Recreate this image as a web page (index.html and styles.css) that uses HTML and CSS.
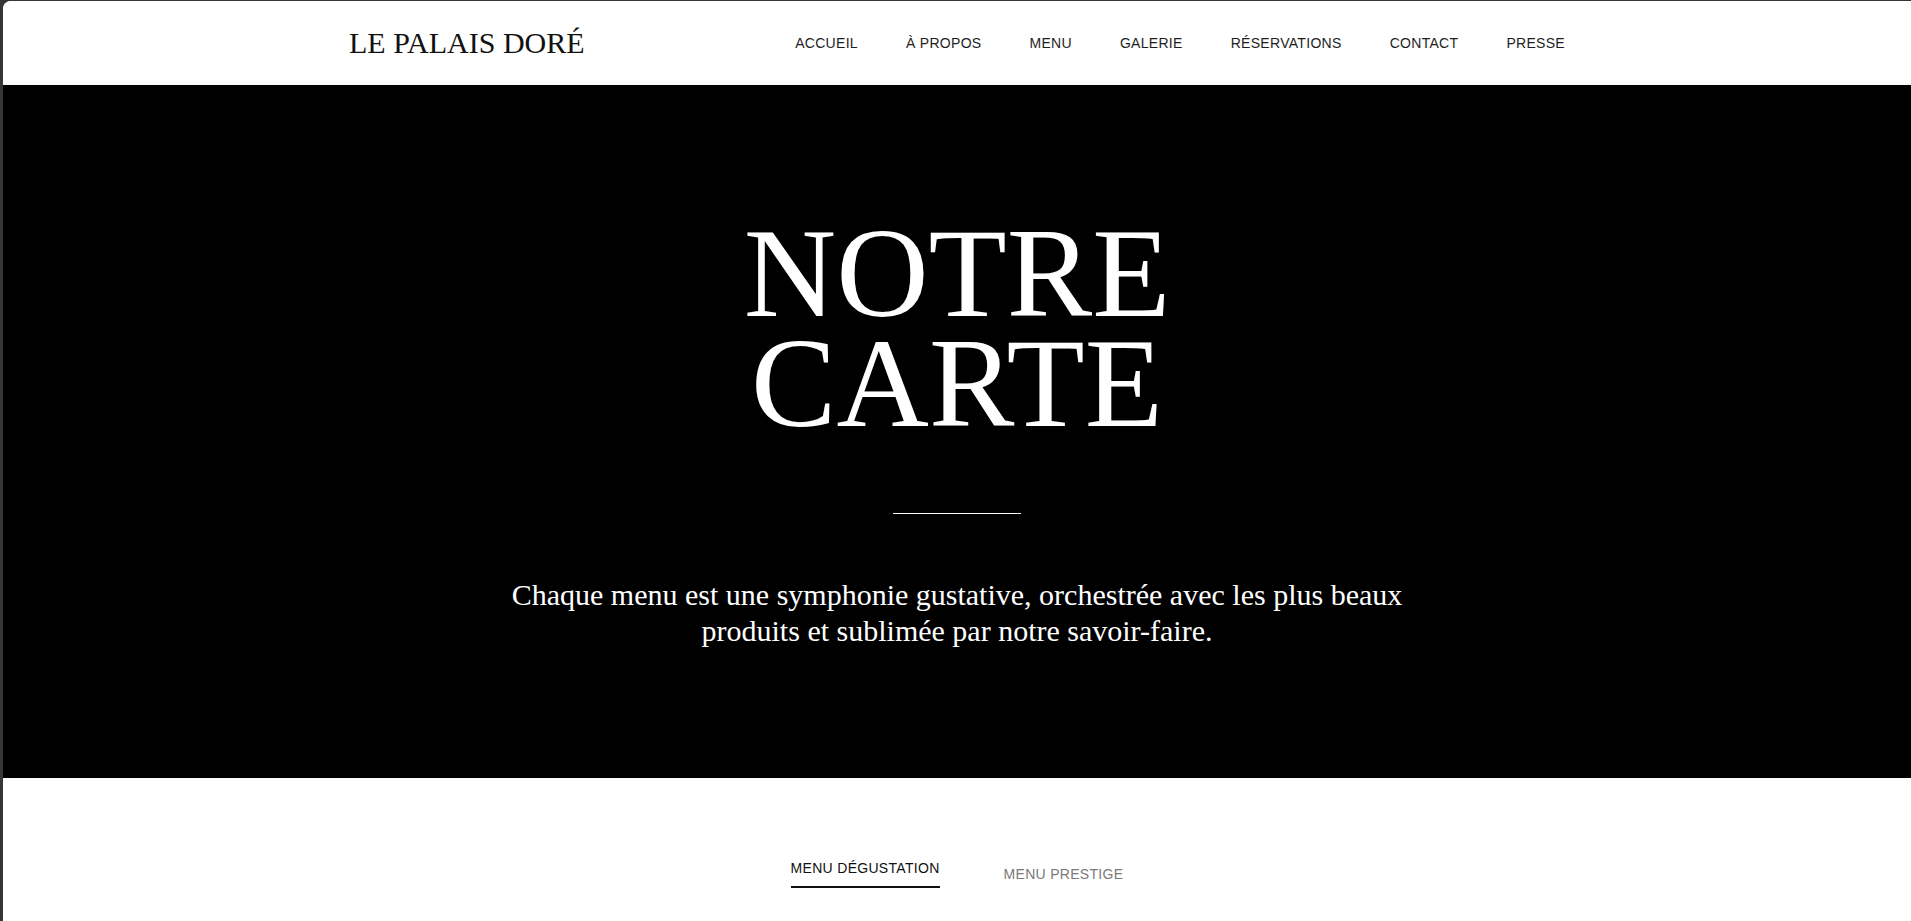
FILE: index.html
```html
<!DOCTYPE html>
<html lang="fr">
<head>
<meta charset="utf-8">
<title>Le Palais Doré — Notre Carte</title>
<link rel="stylesheet" href="styles.css">
</head>
<body>
<div class="window">
  <header class="site-header">
    <div class="header-inner">
      <a class="logo" href="#">LE PALAIS DORÉ</a>
      <nav class="main-nav">
        <a href="#">ACCUEIL</a>
        <a href="#">À PROPOS</a>
        <a href="#">MENU</a>
        <a href="#">GALERIE</a>
        <a href="#">RÉSERVATIONS</a>
        <a href="#">CONTACT</a>
        <a href="#">PRESSE</a>
      </nav>
    </div>
  </header>

  <section class="hero">
    <h1 class="hero-title">NOTRE<br>CARTE</h1>
    <div class="hero-divider"></div>
    <p class="hero-text">Chaque menu est une symphonie gustative, orchestrée avec les plus beaux produits et sublimée par notre savoir-faire.</p>
  </section>

  <section class="menus">
    <div class="tabs">
      <button class="tab active">MENU DÉGUSTATION</button>
      <button class="tab">MENU PRESTIGE</button>
    </div>
  </section>
</div>
</body>
</html>
```
FILE: styles.css
```css
html, body {
  margin: 0;
  padding: 0;
}

body {
  background: #363636;
  font-family: "Liberation Sans", Arial, sans-serif;
  overflow: hidden;
}

.window {
  margin: 1px 0 0 3px;
  background: #ffffff;
  border-top-left-radius: 8px;
  overflow: hidden;
  min-height: 920px;
}

.site-header {
  height: 84px;
  display: flex;
  background: #ffffff;
  box-shadow: inset 0 -6px 6px -6px rgba(0, 0, 0, 0.07);
}

.header-inner {
  width: 100%;
  max-width: 1280px;
  margin: 0 auto;
  padding: 0 32px;
  box-sizing: border-box;
  display: flex;
  align-items: center;
  justify-content: space-between;
}

.logo {
  font-family: "Liberation Serif", "Times New Roman", serif;
  font-size: 30px;
  color: #111111;
  text-decoration: none;
}

.main-nav {
  display: flex;
  gap: 48px;
}

.main-nav a {
  font-size: 14px;
  letter-spacing: 0.3px;
  color: #1e1e1e;
  text-decoration: none;
}

.hero {
  background: #000000;
  color: #ffffff;
  text-align: center;
  padding: 133px 32px 129px;
}

.hero-title {
  margin: 0 0 75px;
  font-family: "Liberation Serif", "Times New Roman", serif;
  font-weight: 400;
  font-size: 128px;
  line-height: 110px;
}

.hero-divider {
  width: 128px;
  height: 1px;
  background: #ffffff;
  margin: 0 auto 63px;
}

.hero-text {
  margin: 0 auto;
  max-width: 900px;
  font-family: "Liberation Serif", "Times New Roman", serif;
  font-size: 30px;
  line-height: 36px;
}

.menus {
  padding: 82px 32px 120px;
}

.tabs {
  display: flex;
  justify-content: center;
  align-items: center;
  gap: 64px;
}

.tab {
  font-family: "Liberation Sans", Arial, sans-serif;
  font-size: 14px;
  letter-spacing: 0.3px;
  line-height: normal;
  color: #7a7a7a;
  background: none;
  border: 0;
  padding: 0;
  cursor: pointer;
}

.tab.active {
  color: #111111;
  padding-bottom: 10px;
  border-bottom: 2px solid #111111;
}
```
